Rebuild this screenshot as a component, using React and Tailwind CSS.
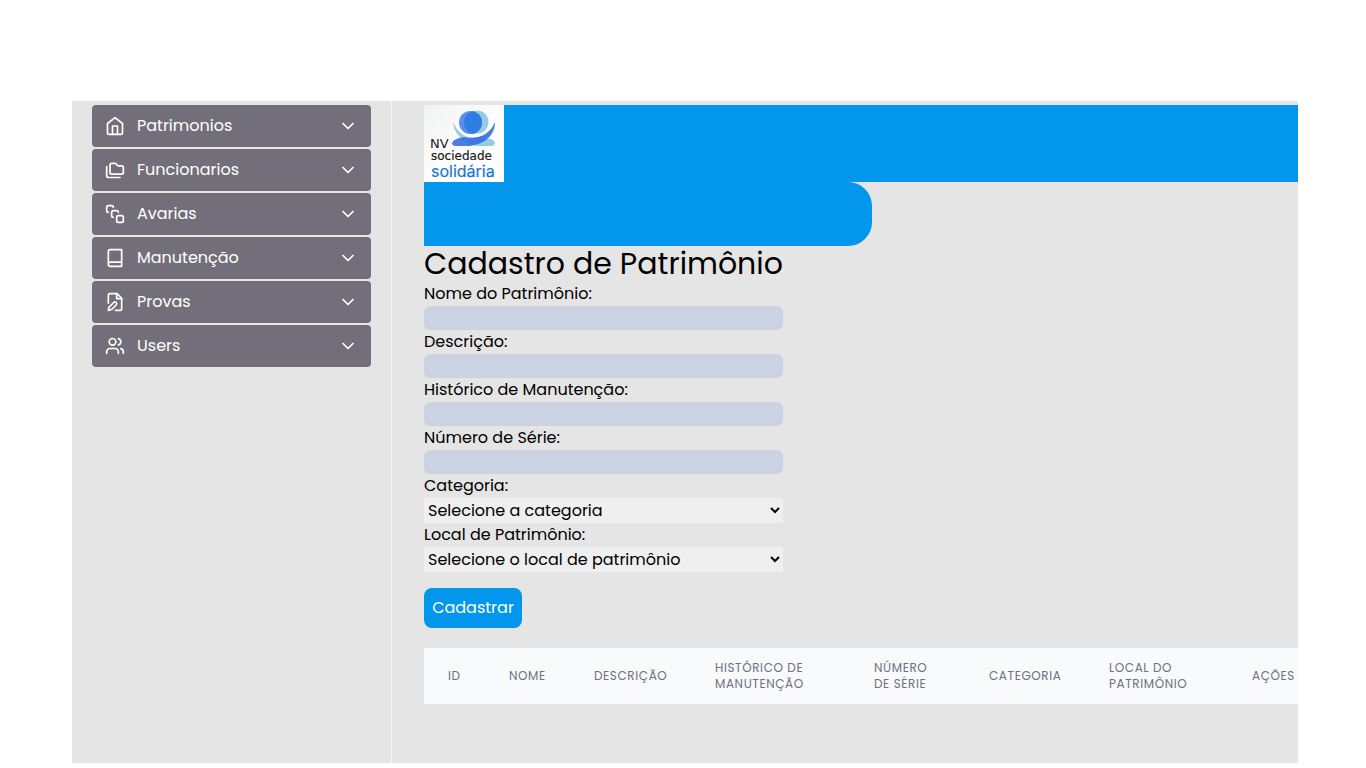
import { SquareStack, Users, ChevronDown } from "lucide-react";

function Outline({ children }) {
  return (
    <svg
      viewBox="0 0 24 24"
      className="size-5"
      fill="none"
      stroke="currentColor"
      strokeWidth="2"
      strokeLinecap="round"
      strokeLinejoin="round"
      aria-hidden="true"
    >
      {children}
    </svg>
  );
}

function HomeIcon() {
  return (
    <Outline>
      <path d="m3 9 9-7 9 7v11a2 2 0 0 1-2 2H5a2 2 0 0 1-2-2z" />
      <polyline points="9 22 9 12 15 12 15 22" />
    </Outline>
  );
}

function FoldersIcon() {
  return (
    <Outline>
      <path d="M8 17h12a2 2 0 0 0 2-2V9a2 2 0 0 0-2-2h-3.930a2 2 0 0 1-1.660-.9l-.820-1.200a2 2 0 0 0-1.660-.9H8a2 2 0 0 0-2 2v9c0 1.100.9 2 2 2Z" />
      <path d="M2 8v11c0 1.100.9 2 2 2h14" />
    </Outline>
  );
}

function BookIcon() {
  return (
    <Outline>
      <path d="M4 19.500v-15A2.500 2.500 0 0 1 6.500 2H20v20H6.500a2.500 2.500 0 0 1 0-5H20" />
    </Outline>
  );
}

function FileEditIcon() {
  return (
    <Outline>
      <path d="M4 13.500V4a2 2 0 0 1 2-2h8.500L20 7.500V20a2 2 0 0 1-2 2h-5.500" />
      <polyline points="14 2 14 8 20 8" />
      <path d="M10.420 12.610a2.100 2.100 0 1 1 2.970 2.970L7.950 21 4 22l.990-3.950 5.430-5.440Z" />
    </Outline>
  );
}

const menu = [
  { label: "Patrimonios", Icon: HomeIcon },
  { label: "Funcionarios", Icon: FoldersIcon },
  { label: "Avarias", Icon: SquareStack },
  { label: "Manutenção", Icon: BookIcon },
  { label: "Provas", Icon: FileEditIcon },
  { label: "Users", Icon: Users },
];

const fields = [
  { id: "nome", label: "Nome do Patrimônio:" },
  { id: "descricao", label: "Descrição:" },
  { id: "historico", label: "Histórico de Manutenção:" },
  { id: "serie", label: "Número de Série:" },
];

const selects = [
  { id: "categoria", label: "Categoria:", option: "Selecione a categoria" },
  { id: "local", label: "Local de Patrimônio:", option: "Selecione o local de patrimônio" },
];

const columns = [
  { label: "ID", width: "w-[61px]" },
  { label: "Nome", width: "w-[85px]" },
  { label: "Descrição", width: "w-[121px]" },
  { label: "Histórico de Manutenção", width: "w-[159px]" },
  { label: "Número de Série", width: "w-[115px]" },
  { label: "Categoria", width: "w-[120px]" },
  { label: "Local do Patrimônio", width: "w-[143px]" },
  { label: "Ações", width: "w-[92px]" },
];

function Logo() {
  return (
    <svg viewBox="0 0 80 77" className="h-[77px] w-20 shrink-0" role="img" aria-label="NV Sociedade Solidária">
      <defs>
        <linearGradient id="paper" x1="0" y1="0" x2="1" y2="1">
          <stop offset="0" stopColor="#f1f2f3" />
          <stop offset="0.5" stopColor="#fdfdfd" />
          <stop offset="1" stopColor="#ffffff" />
        </linearGradient>
        <clipPath id="head">
          <circle cx="46.500" cy="17.500" r="11.500" />
        </clipPath>
      </defs>
      <rect width="80" height="77" fill="url(#paper)" />
      <circle cx="53" cy="17" r="11.500" fill="#93cde3" />
      <circle cx="46.500" cy="17.500" r="11.500" fill="#5b8eea" />
      <circle cx="51.500" cy="17.500" r="11.500" fill="#2f7de1" clipPath="url(#head)" />
      <path d="M29 17C33 27 41 33 50 33C60 33 69 32 71 38Q71 41 67 41H54C42 40 30 30 29 17Z" fill="#93cde3" />
      <path d="M71 17C67 27 58 32.500 50 33C40 32 31 32 28 38Q28 41 32 41H46C60 39 71 31 71 17Z" fill="#4a7ee6" />
      <path d="M40 32.500Q50 34 60 30.500Q66 34 59 36.500Q52 40 47 39.500Q38 36 36 33Z" fill="#3f76e2" />
      <text x="6" y="43" fontSize="13" fill="#1b1b1b" fontFamily="DejaVu Sans, sans-serif">NV</text>
      <text x="7" y="55" fontSize="12" fill="#1b1b1b" stroke="#1b1b1b" strokeWidth="0.2" fontFamily="DejaVu Sans, sans-serif">sociedade</text>
      <text x="7" y="72" fontSize="16" fill="#1976d2" stroke="#1976d2" strokeWidth="0.2" fontFamily="Inter, sans-serif">solidária</text>
    </svg>
  );
}

export default function App() {
  return (
    <div className="min-h-screen bg-white pt-[101px] pr-[68px] pb-[5px] pl-[72px] font-[Poppins,Inter,sans-serif] text-base text-black">
      <div className="flex min-h-[662px] overflow-hidden bg-[#e5e5e5]">
        <nav className="w-80 shrink-0 border-r border-[#f5f5f5] px-5 pt-1">
          <ul className="flex flex-col gap-0.5">
            {menu.map(({ label, Icon }) => (
              <li key={label}>
                <button type="button" className="flex h-[42px] w-full items-center rounded bg-[#736f7a] px-[13px] text-white">
                  <Icon size={20} aria-hidden="true" />
                  <span className="ml-3">{label}</span>
                  <ChevronDown size={20} className="ml-auto" aria-hidden="true" />
                </button>
              </li>
            ))}
          </ul>
        </nav>

        <main className="min-w-0 flex-1 overflow-hidden pt-1 pl-8">
          <header className="flex bg-[#0396ed]">
            <Logo />
          </header>
          <div className="h-16 w-[448px] rounded-r-3xl bg-[#0396ed]" />

          <form className="w-[359px]">
            <h1 className="text-3xl whitespace-nowrap">Cadastro de Patrimônio</h1>
            {fields.map(({ id, label }) => (
              <div key={id}>
                <label htmlFor={id} className="block">{label}</label>
                <input id={id} type="text" className="block h-6 w-full rounded-md bg-[#cbd2e1]" />
              </div>
            ))}
            {selects.map(({ id, label, option }) => (
              <div key={id}>
                <label htmlFor={id} className="block">{label}</label>
                <select id={id} className="block h-[25px] w-full bg-[#efefef]">
                  <option>{option}</option>
                </select>
              </div>
            ))}
            <button type="button" className="mt-4 h-10 w-[98px] rounded-lg bg-[#0396ed] text-white">
              Cadastrar
            </button>
          </form>

          <table className="mt-5 w-[896px] table-fixed">
            <thead className="bg-[#f9fafb]">
              <tr>
                {columns.map(({ label, width }) => (
                  <th
                    key={label}
                    scope="col"
                    className={width + " h-14 px-6 text-left text-xs font-normal tracking-wider text-[#6b7280] uppercase"}
                  >
                    {label}
                  </th>
                ))}
              </tr>
            </thead>
          </table>
        </main>
      </div>
    </div>
  );
}
